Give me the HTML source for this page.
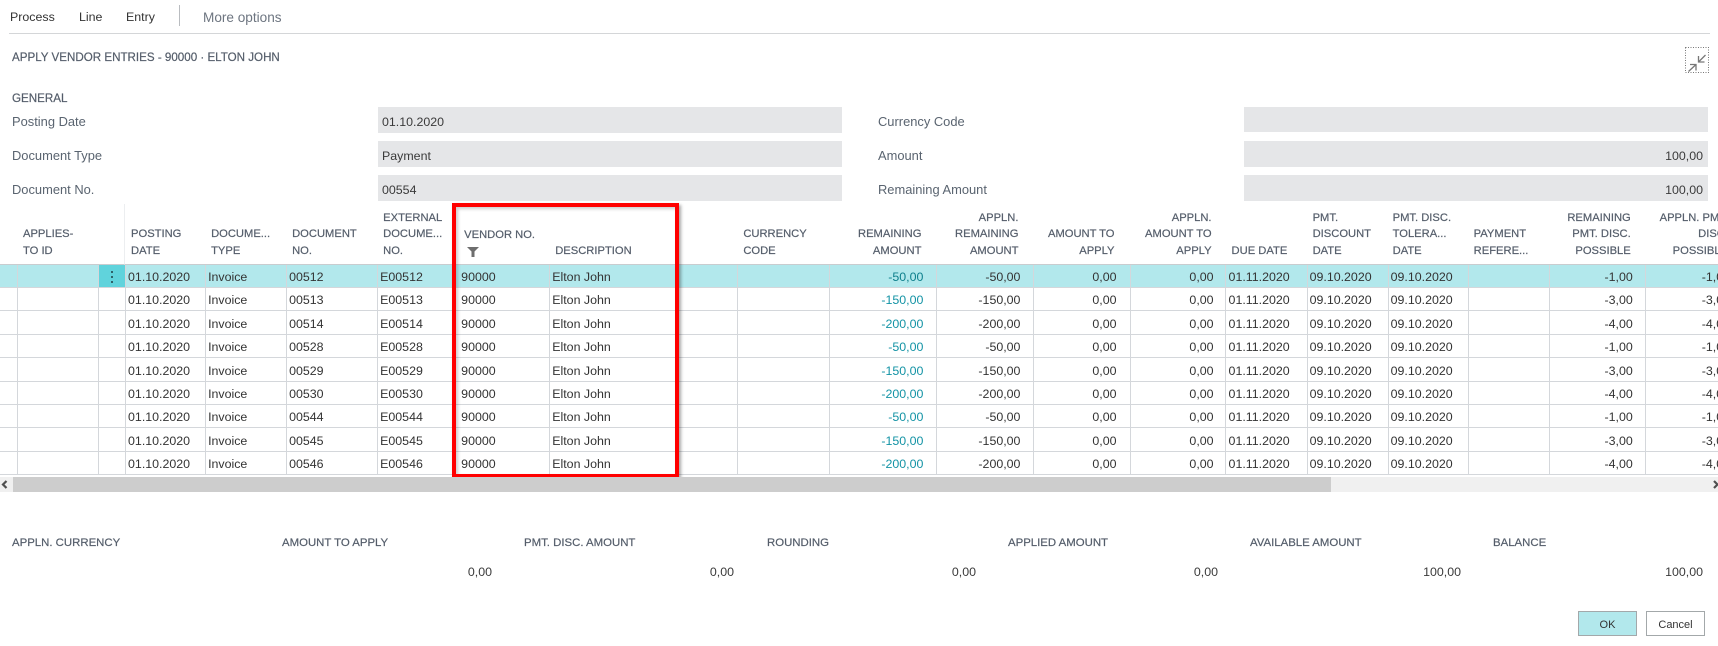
<!DOCTYPE html>
<html>
<head>
<meta charset="utf-8">
<style>
html,body{margin:0;padding:0;background:#fff}
body{width:1718px;height:646px;overflow:hidden;position:relative;font-family:"Liberation Sans",sans-serif;color:#333}
.a{position:absolute;white-space:nowrap}
.lb{font-size:12.9px;color:#5a6470;line-height:16px}
.h{font-size:11.4px;color:#545d6a;line-height:16px;-webkit-text-stroke:.2px #545d6a}
.f{position:absolute;background:#e5e6e8;height:26px}
.v{font-size:12.4px;color:#3a3a3a;line-height:16px}
#g{position:absolute;left:0;top:204px;width:1718px;height:272px;overflow:hidden}
table{border-collapse:separate;border-spacing:0;table-layout:fixed;width:1750px;font-size:12.4px}
th{font-weight:normal;font-size:11.2px;color:#545d6a;-webkit-text-stroke:.2px #545d6a;text-align:left;vertical-align:bottom;line-height:16.5px;padding:0 6px 5px 6px;height:50px;white-space:nowrap;overflow:visible}
th.r{text-align:right;padding-right:15px}
td{padding:2px 0 0 2px;border-left:1px solid #d4d7db;border-bottom:1px solid #d4d7db;white-space:nowrap;overflow:hidden;color:#333;line-height:16px;box-sizing:border-box}
td:first-child{border-left:0}
td.r{text-align:right;padding-right:13px;padding-left:0}
td.t{color:#1393a5}
td.n{padding-left:7px}
tr.s td{background:#b2e8ec;border-top:0}
tr.s td.t{color:#0d7f8c}
tr.s td.d{background:#60d3dc}
thead th{border-bottom:1px solid #c9cccf}
</style>
</head>
<body>
<div class="a" style="left:10px;top:9px;font-size:12.4px;line-height:17px;color:#333">Process</div>
<div class="a" style="left:79px;top:9px;font-size:12.4px;line-height:17px;color:#333">Line</div>
<div class="a" style="left:126px;top:9px;font-size:12.4px;line-height:17px;color:#333">Entry</div>
<div class="a" style="left:179px;top:5px;width:1px;height:21px;background:#b9bcc0"></div>
<div class="a" style="left:203px;top:9px;font-size:13.6px;line-height:17px;color:#6d7580">More options</div>
<div class="a" style="left:9px;top:33px;width:1701px;height:1px;background:#d4d6d8"></div>

<div class="a h" style="left:12px;top:50px;font-size:11.6px">APPLY VENDOR ENTRIES - 90000 · ELTON JOHN</div>

<svg class="a" style="left:1685px;top:47px" width="25" height="27" viewBox="0 0 25 27">
<rect x=".5" y=".5" width="23" height="25" fill="none" stroke="#777" stroke-width="1" stroke-dasharray="1 1.5"/>
<path d="M3.5 24.5L11 17.5M5 17.5H11V23.5" fill="none" stroke="#777" stroke-width="1.3"/>
<path d="M20.5 8L13.5 15M13.5 9V15H19.5" fill="none" stroke="#777" stroke-width="1.3"/>
</svg>

<div class="a h" style="left:12px;top:91px;font-size:11.6px">GENERAL</div>
<div class="a lb" style="left:12px;top:114px">Posting Date</div>
<div class="a lb" style="left:12px;top:148px">Document Type</div>
<div class="a lb" style="left:12px;top:182px">Document No.</div>
<div class="f" style="left:378px;top:107px;width:464px"></div>
<div class="f" style="left:378px;top:141px;width:464px"></div>
<div class="f" style="left:378px;top:175px;width:464px"></div>
<div class="a v" style="left:382px;top:114px">01.10.2020</div>
<div class="a v" style="left:382px;top:148px">Payment</div>
<div class="a v" style="left:382px;top:182px">00554</div>
<div class="a lb" style="left:878px;top:114px">Currency Code</div>
<div class="a lb" style="left:878px;top:148px">Amount</div>
<div class="a lb" style="left:878px;top:182px">Remaining Amount</div>
<div class="f" style="left:1244px;top:107px;width:464px;height:25px"></div>
<div class="f" style="left:1244px;top:141px;width:464px"></div>
<div class="f" style="left:1244px;top:175px;width:464px"></div>
<div class="a v" style="right:15px;top:148px">100,00</div>
<div class="a v" style="right:15px;top:182px">100,00</div>

<div id="g">
<table>
<colgroup>
<col style="width:17px"><col style="width:81px"><col style="width:27px"><col style="width:80px"><col style="width:81px"><col style="width:91px"><col style="width:76px"><col style="width:96px"><col style="width:188px"><col style="width:92px"><col style="width:107px"><col style="width:97px"><col style="width:96px"><col style="width:95px"><col style="width:82px"><col style="width:81px"><col style="width:80px"><col style="width:81px"><col style="width:96px"><col style="width:105px">
</colgroup>
<thead>
<tr style="height:61px">
<th></th><th>APPLIES-<br>TO ID</th><th style="border-right:1px solid #eceef0"></th><th>POSTING<br>DATE</th><th>DOCUME...<br>TYPE</th><th>DOCUMENT<br>NO.</th><th>EXTERNAL<br>DOCUME...<br>NO.</th><th style="padding-left:11px"><div style="position:relative;top:-16px">VENDOR NO.</div></th><th style="padding-left:6px">DESCRIPTION</th><th>CURRENCY<br>CODE</th><th class="r">REMAINING<br>AMOUNT</th><th class="r">APPLN.<br>REMAINING<br>AMOUNT</th><th class="r">AMOUNT TO<br>APPLY</th><th class="r" style="padding-right:13px">APPLN.<br>AMOUNT TO<br>APPLY</th><th style="padding-left:7px">DUE DATE</th><th>PMT.<br>DISCOUNT<br>DATE</th><th style="padding-left:5px">PMT. DISC.<br>TOLERA...<br>DATE</th><th>PAYMENT<br>REFERE...</th><th class="r" style="padding-right:14px">REMAINING<br>PMT. DISC.<br>POSSIBLE</th><th class="r" style="padding-right:22px">APPLN. PMT.<br>DISC.<br>POSSIBLE</th>
</tr>
</thead>
<tbody>
<tr class="s" style="height:23px"><td></td><td></td><td class="d"></td><td>01.10.2020</td><td>Invoice</td><td>00512</td><td>E00512</td><td class="n">90000</td><td>Elton John</td><td></td><td class="r t">-50,00</td><td class="r">-50,00</td><td class="r">0,00</td><td class="r" style="padding-right:11px">0,00</td><td style="padding-left:3px">01.11.2020</td><td>09.10.2020</td><td>09.10.2020</td><td></td><td class="r" style="padding-right:12px">-1,00</td><td class="r" style="padding-right:20px">-1,00</td></tr>
<tr style="height:23px"><td></td><td></td><td></td><td>01.10.2020</td><td>Invoice</td><td>00513</td><td>E00513</td><td class="n">90000</td><td>Elton John</td><td></td><td class="r t">-150,00</td><td class="r">-150,00</td><td class="r">0,00</td><td class="r" style="padding-right:11px">0,00</td><td style="padding-left:3px">01.11.2020</td><td>09.10.2020</td><td>09.10.2020</td><td></td><td class="r" style="padding-right:12px">-3,00</td><td class="r" style="padding-right:20px">-3,00</td></tr>
<tr style="height:24px"><td></td><td></td><td></td><td>01.10.2020</td><td>Invoice</td><td>00514</td><td>E00514</td><td class="n">90000</td><td>Elton John</td><td></td><td class="r t">-200,00</td><td class="r">-200,00</td><td class="r">0,00</td><td class="r" style="padding-right:11px">0,00</td><td style="padding-left:3px">01.11.2020</td><td>09.10.2020</td><td>09.10.2020</td><td></td><td class="r" style="padding-right:12px">-4,00</td><td class="r" style="padding-right:20px">-4,00</td></tr>
<tr style="height:23px"><td></td><td></td><td></td><td>01.10.2020</td><td>Invoice</td><td>00528</td><td>E00528</td><td class="n">90000</td><td>Elton John</td><td></td><td class="r t">-50,00</td><td class="r">-50,00</td><td class="r">0,00</td><td class="r" style="padding-right:11px">0,00</td><td style="padding-left:3px">01.11.2020</td><td>09.10.2020</td><td>09.10.2020</td><td></td><td class="r" style="padding-right:12px">-1,00</td><td class="r" style="padding-right:20px">-1,00</td></tr>
<tr style="height:24px"><td></td><td></td><td></td><td>01.10.2020</td><td>Invoice</td><td>00529</td><td>E00529</td><td class="n">90000</td><td>Elton John</td><td></td><td class="r t">-150,00</td><td class="r">-150,00</td><td class="r">0,00</td><td class="r" style="padding-right:11px">0,00</td><td style="padding-left:3px">01.11.2020</td><td>09.10.2020</td><td>09.10.2020</td><td></td><td class="r" style="padding-right:12px">-3,00</td><td class="r" style="padding-right:20px">-3,00</td></tr>
<tr style="height:23px"><td></td><td></td><td></td><td>01.10.2020</td><td>Invoice</td><td>00530</td><td>E00530</td><td class="n">90000</td><td>Elton John</td><td></td><td class="r t">-200,00</td><td class="r">-200,00</td><td class="r">0,00</td><td class="r" style="padding-right:11px">0,00</td><td style="padding-left:3px">01.11.2020</td><td>09.10.2020</td><td>09.10.2020</td><td></td><td class="r" style="padding-right:12px">-4,00</td><td class="r" style="padding-right:20px">-4,00</td></tr>
<tr style="height:23px"><td></td><td></td><td></td><td>01.10.2020</td><td>Invoice</td><td>00544</td><td>E00544</td><td class="n">90000</td><td>Elton John</td><td></td><td class="r t">-50,00</td><td class="r">-50,00</td><td class="r">0,00</td><td class="r" style="padding-right:11px">0,00</td><td style="padding-left:3px">01.11.2020</td><td>09.10.2020</td><td>09.10.2020</td><td></td><td class="r" style="padding-right:12px">-1,00</td><td class="r" style="padding-right:20px">-1,00</td></tr>
<tr style="height:24px"><td></td><td></td><td></td><td>01.10.2020</td><td>Invoice</td><td>00545</td><td>E00545</td><td class="n">90000</td><td>Elton John</td><td></td><td class="r t">-150,00</td><td class="r">-150,00</td><td class="r">0,00</td><td class="r" style="padding-right:11px">0,00</td><td style="padding-left:3px">01.11.2020</td><td>09.10.2020</td><td>09.10.2020</td><td></td><td class="r" style="padding-right:12px">-3,00</td><td class="r" style="padding-right:20px">-3,00</td></tr>
<tr style="height:23px"><td></td><td></td><td></td><td>01.10.2020</td><td>Invoice</td><td>00546</td><td>E00546</td><td class="n">90000</td><td>Elton John</td><td></td><td class="r t">-200,00</td><td class="r">-200,00</td><td class="r">0,00</td><td class="r" style="padding-right:11px">0,00</td><td style="padding-left:3px">01.11.2020</td><td>09.10.2020</td><td>09.10.2020</td><td></td><td class="r" style="padding-right:12px">-4,00</td><td class="r" style="padding-right:20px">-4,00</td></tr>
</tbody>
</table>
</div>

<!-- row action dots -->
<svg class="a" style="left:99px;top:265px" width="26" height="23" viewBox="0 0 26 23"><circle cx="13" cy="7" r="1" fill="#1f3f44"/><circle cx="13" cy="12" r="1" fill="#1f3f44"/><circle cx="13" cy="17" r="1" fill="#1f3f44"/></svg>
<!-- filter icon -->
<svg class="a" style="left:467px;top:247px" width="12" height="10" viewBox="0 0 12 10"><path d="M0 0H12L7.5 4.5V10H4.5V4.5Z" fill="#6e6e6e"/></svg>

<!-- red highlight -->
<div class="a" style="left:452px;top:203px;width:219px;height:267px;border:4px solid #f00;box-shadow:2px 2px 3px rgba(0,0,0,.35),inset 2px 2px 3px rgba(0,0,0,.2)"></div>

<!-- scrollbar -->
<div class="a" style="left:0;top:477px;width:1718px;height:15px;background:#f0f0f0"></div>
<div class="a" style="left:13px;top:477px;width:1318px;height:15px;background:#cdcdcd"></div>
<svg class="a" style="left:0;top:477px" width="13" height="15" viewBox="0 0 13 15"><path d="M6.5 4L3 7.5L6.5 11" fill="none" stroke="#505050" stroke-width="2.2"/></svg>
<svg class="a" style="left:1705px;top:477px" width="13" height="15" viewBox="0 0 13 15"><path d="M9 4L12.5 7.5L9 11" fill="none" stroke="#505050" stroke-width="2.2"/></svg>

<!-- totals -->
<div class="a h" style="left:12px;top:535px">APPLN. CURRENCY</div>
<div class="a h" style="left:282px;top:535px">AMOUNT TO APPLY</div>
<div class="a h" style="left:524px;top:535px">PMT. DISC. AMOUNT</div>
<div class="a h" style="left:767px;top:535px">ROUNDING</div>
<div class="a h" style="left:1008px;top:535px">APPLIED AMOUNT</div>
<div class="a h" style="left:1250px;top:535px">AVAILABLE AMOUNT</div>
<div class="a h" style="left:1493px;top:535px">BALANCE</div>
<div class="a v" style="right:1226px;top:564px">0,00</div>
<div class="a v" style="right:984px;top:564px">0,00</div>
<div class="a v" style="right:742px;top:564px">0,00</div>
<div class="a v" style="right:500px;top:564px">0,00</div>
<div class="a v" style="right:257px;top:564px">100,00</div>
<div class="a v" style="right:15px;top:564px">100,00</div>

<!-- buttons -->
<div class="a" style="left:1578px;top:611px;width:57px;height:23px;background:#b2e8ec;border:1px solid #a3a8aa;text-align:center;font-size:11px;line-height:27px;color:#333">OK</div>
<div class="a" style="left:1646px;top:611px;width:57px;height:23px;background:#fff;border:1px solid #a3a8aa;text-align:center;font-size:11px;line-height:27px;color:#333">Cancel</div>
</body>
</html>
